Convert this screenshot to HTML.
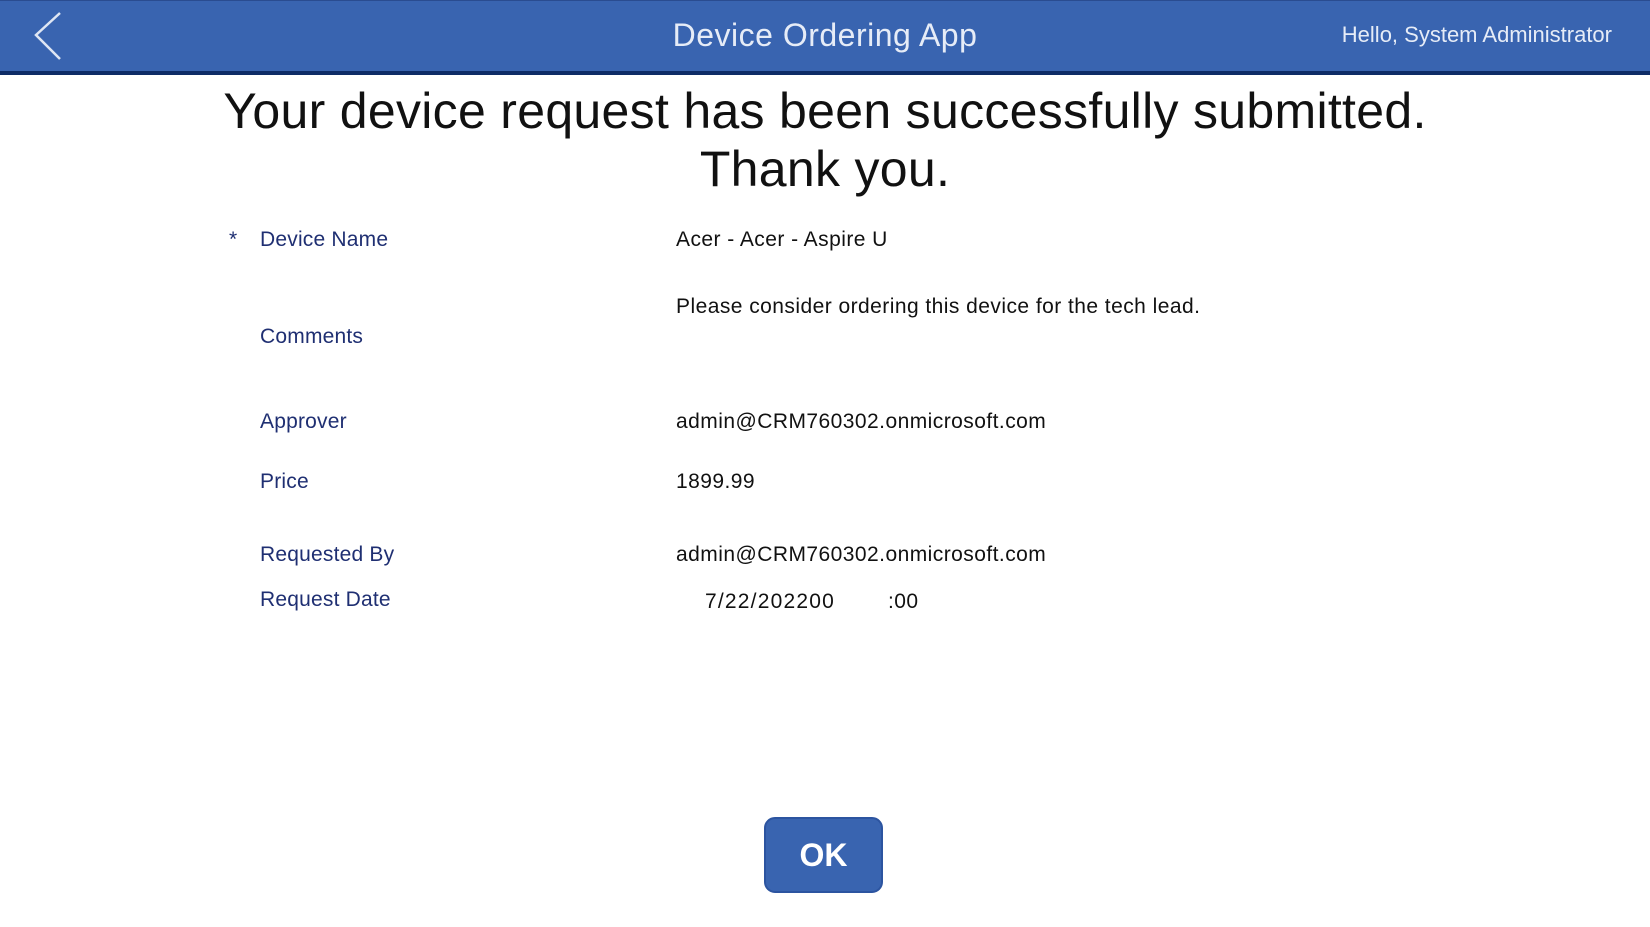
<!DOCTYPE html>
<html><head><meta charset="utf-8"><style>
body{margin:0;width:1650px;height:927px;background:#fff;font-family:"Liberation Sans",sans-serif;position:relative;overflow:hidden}
.hdr{position:absolute;left:0;top:0;width:1650px;height:70px;background:#3964b0;border-bottom:4px solid #0e2c66;border-top:1px solid #2a4c90}
.t{position:absolute;white-space:nowrap}
.lab{color:#1f2f72;font-size:21px;left:260px;letter-spacing:0.2px}
.val{color:#111;font-size:21px;left:676px;letter-spacing:0.45px}
</style></head><body>
<div class="hdr">
<svg style="position:absolute;left:30px;top:10px" width="40" height="52"><polyline points="30,2 6,24 30,48" fill="none" stroke="#dfe6f3" stroke-width="2.5"/></svg>
<div class="t" style="left:0;width:1650px;text-align:center;top:16px;font-size:32px;color:#e6ecf7;letter-spacing:0.5px">Device Ordering App</div>
<div class="t" style="right:38px;top:21px;font-size:22px;color:#e6ecf7">Hello, System Administrator</div>
</div>
<div class="t" style="left:0;width:1650px;text-align:center;top:82px;font-size:50px;line-height:58px;color:#111;letter-spacing:0.3px">Your device request has been successfully submitted.<br>Thank you.</div>
<div class="t lab" style="left:229px;top:228px">*</div>
<div class="t lab" style="top:228px">Device Name</div>
<div class="t val" style="top:228px">Acer - Acer - Aspire U</div>
<div class="t val" style="top:295px">Please consider ordering this device for the tech lead.</div>
<div class="t lab" style="top:325px">Comments</div>
<div class="t lab" style="top:410px">Approver</div>
<div class="t val" style="top:410px">admin@CRM760302.onmicrosoft.com</div>
<div class="t lab" style="top:470px">Price</div>
<div class="t val" style="top:470px">1899.99</div>
<div class="t lab" style="top:543px">Requested By</div>
<div class="t val" style="top:543px">admin@CRM760302.onmicrosoft.com</div>
<div class="t lab" style="top:588px">Request Date</div>
<div class="t val" style="left:705px;top:590px;letter-spacing:1.2px">7/22/202200</div>
<div class="t val" style="left:888px;top:590px">:00</div>
<div style="position:absolute;left:764px;top:817px;width:115px;height:72px;background:#3964b0;border:2px solid #2c54a0;border-radius:11px;color:#fff;font-weight:bold;font-size:32px;text-align:center;line-height:72px">OK</div>
</body></html>
